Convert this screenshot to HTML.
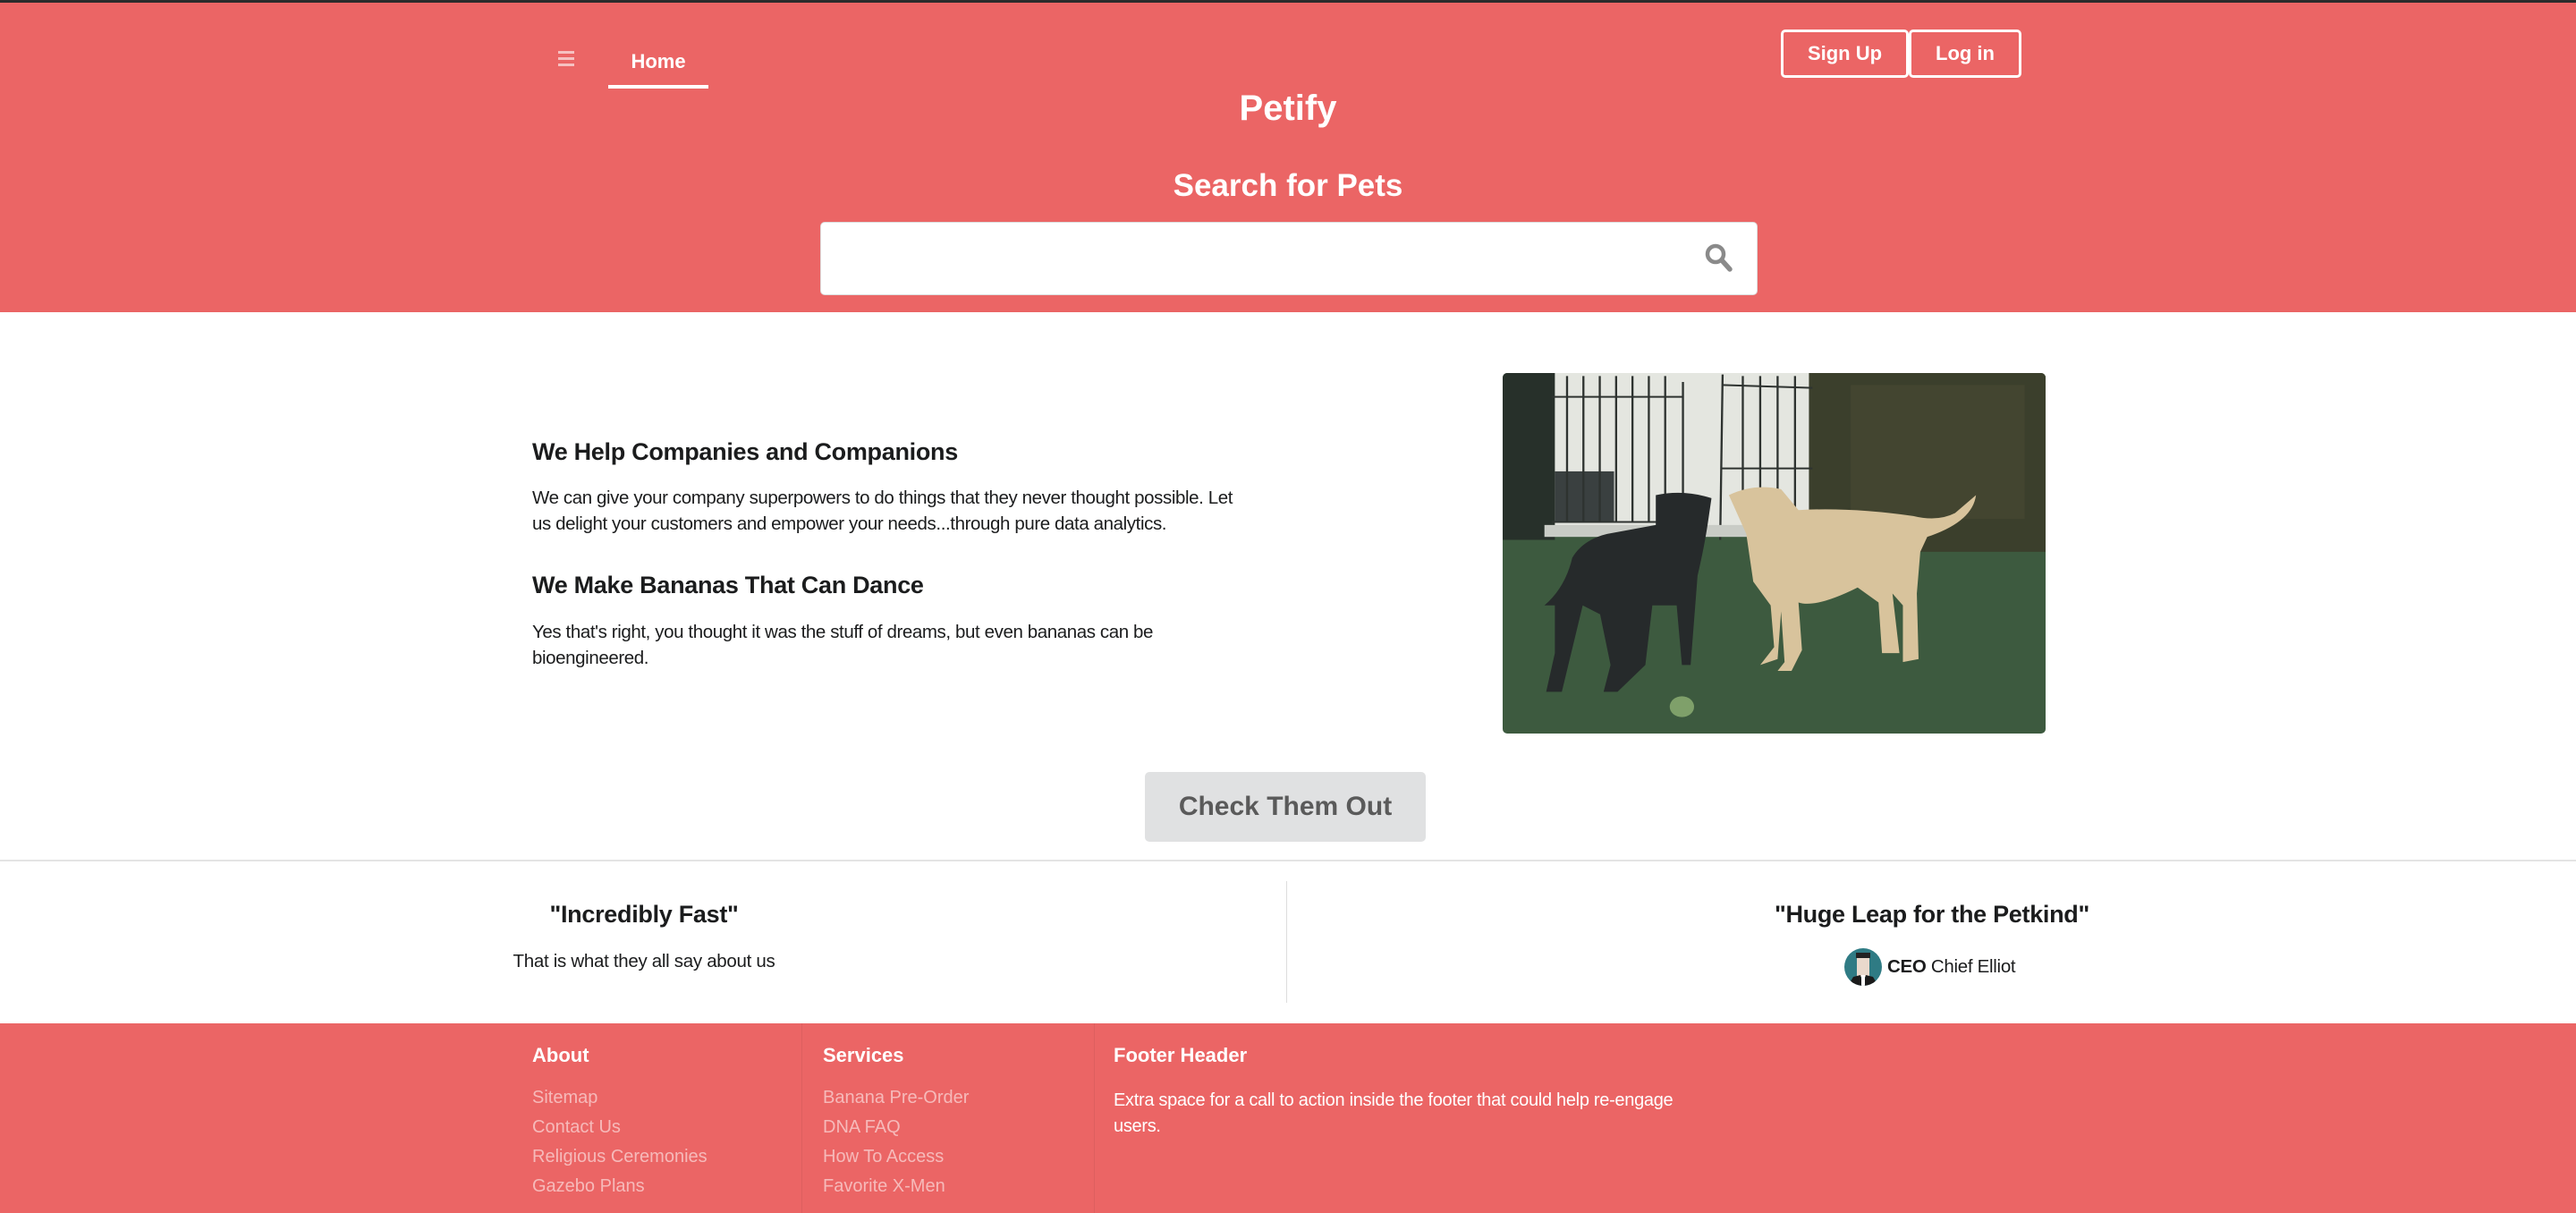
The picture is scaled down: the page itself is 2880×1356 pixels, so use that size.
<!DOCTYPE html>
<html><head><meta charset="utf-8">
<style>
*{margin:0;padding:0;box-sizing:border-box}
body{width:2880px;height:1356px;overflow:hidden;background:#fff;font-family:"Liberation Sans",sans-serif;color:#1b1c1d;position:relative}
.abs{position:absolute}
.hdr{left:0;top:0;width:2880px;height:349px;background:#eb6565;border-top:3px solid #2b2b2b}
.btn{top:33px;height:54px;border:3px solid #fff;border-radius:5px;color:#fff;font-weight:bold;font-size:22px;display:flex;align-items:center;justify-content:center}
.c{text-align:center;white-space:nowrap}
.h3{font-size:27px;font-weight:bold;letter-spacing:-0.3px}
.p{font-size:20.5px;line-height:29px;letter-spacing:-0.4px;white-space:nowrap}
.ft{left:0;top:1144px;width:2880px;height:212px;background:#eb6565}
.fh{color:#fff;font-weight:bold;font-size:22px}
.fl{color:rgba(255,255,255,.55);font-size:20px;line-height:33px;white-space:nowrap}
</style></head><body>
<div class="abs hdr"></div>
<div class="abs" style="left:624px;top:57px;width:18px;height:16px">
<div style="height:3px;background:#f6c1c1;margin-bottom:4px"></div><div style="height:3px;background:#f6c1c1;margin-bottom:4px"></div><div style="height:3px;background:#f6c1c1"></div></div>
<div class="abs c" style="left:680px;top:56px;width:112px;color:#fff;font-weight:bold;font-size:22px">Home</div>
<div class="abs" style="left:680px;top:95px;width:112px;height:4px;background:#fff"></div>
<div class="abs btn" style="left:1991px;width:143px">Sign Up</div>
<div class="abs btn" style="left:2134px;width:126px">Log in</div>
<div class="abs c" style="left:1240px;top:99px;width:400px;color:#fff;font-weight:bold;font-size:40px">Petify</div>
<div class="abs c" style="left:1140px;top:188px;width:600px;color:#fff;font-weight:bold;font-size:35px">Search for Pets</div>
<div class="abs" style="left:917px;top:248px;width:1048px;height:82px;background:#fff;border:1px solid #ddd;border-radius:5px"></div>
<svg class="abs" style="left:1906px;top:272px" width="32" height="34" viewBox="0 0 32 34"><circle cx="12" cy="12" r="9" fill="none" stroke="#8a8a8a" stroke-width="4.5"/><line x1="19" y1="19" x2="28" y2="29" stroke="#8a8a8a" stroke-width="5.5" stroke-linecap="round"/></svg>

<div class="abs h3" style="left:595px;top:490px">We Help Companies and Companions</div>
<div class="abs p" style="left:595px;top:542px">We can give your company superpowers to do things that they never thought possible. Let<br>us delight your customers and empower your needs...through pure data analytics.</div>
<div class="abs h3" style="left:595px;top:639px">We Make Bananas That Can Dance</div>
<div class="abs p" style="left:595px;top:692px">Yes that's right, you thought it was the stuff of dreams, but even bananas can be<br>bioengineered.</div>

<svg class="abs" style="left:1680px;top:417px;border-radius:5px" width="607" height="403" viewBox="0 20 1560 1210" preserveAspectRatio="none">
<rect x="0" y="20" width="1560" height="1210" fill="#3d5a3f"/>
<rect x="140" y="20" width="760" height="540" fill="#e4e6e0"/>
<rect x="150" y="350" width="170" height="170" fill="#3a4040"/>
<rect x="0" y="20" width="150" height="560" fill="#27302a"/>
<rect x="880" y="20" width="680" height="600" fill="#3b3f2c"/>
<rect x="1000" y="60" width="500" height="450" fill="#4a4a33" opacity=".6"/>
<g stroke="#2e3330" stroke-width="6">
<line x1="140" y1="100" x2="520" y2="100"/><line x1="140" y1="520" x2="520" y2="520"/><line x1="630" y1="60" x2="890" y2="70"/><line x1="630" y1="340" x2="890" y2="340"/>
<line x1="185" y1="30" x2="185" y2="520"/><line x1="232" y1="30" x2="232" y2="520"/><line x1="279" y1="30" x2="279" y2="520"/><line x1="326" y1="30" x2="326" y2="520"/><line x1="373" y1="30" x2="373" y2="520"/><line x1="420" y1="30" x2="420" y2="520"/><line x1="467" y1="30" x2="467" y2="520"/><line x1="518" y1="50" x2="518" y2="520"/>
<line x1="632" y1="25" x2="625" y2="580"/><line x1="690" y1="30" x2="690" y2="480"/><line x1="740" y1="30" x2="740" y2="480"/><line x1="790" y1="30" x2="790" y2="480"/><line x1="840" y1="30" x2="840" y2="480"/>
</g>
<rect x="120" y="530" width="780" height="40" fill="#c9ccc6"/>
<path d="M440 430 Q520 410 600 440 L590 520 Q580 600 560 700 L540 1000 L515 1000 L500 800 L430 800 L410 1000 L330 1090 L290 1090 L310 1000 L280 830 L230 800 L170 1090 L125 1090 L150 960 L150 800 L120 800 Q180 740 200 640 Q230 580 300 560 L440 530 Z" fill="#262a2b"/>
<path d="M650 430 Q720 390 800 410 L850 480 Q1000 470 1180 500 Q1250 520 1300 490 L1360 430 Q1350 520 1220 570 L1200 620 L1190 760 L1195 980 L1150 990 L1150 800 L1120 760 L1140 960 L1090 960 L1080 790 L1020 740 Q900 810 850 790 L860 950 L830 1020 L790 1020 L810 990 L800 820 L790 980 L740 1000 L780 940 L770 800 L720 720 L700 560 Z" fill="#d8c39c"/>
<circle cx="515" cy="1140" r="35" fill="#7fa06a"/>
</svg>

<div class="abs" style="left:1280px;top:863px;width:314px;height:78px;background:#e0e1e2;border-radius:5px;color:#5a5a5a;font-weight:bold;font-size:30px;display:flex;align-items:center;justify-content:center">Check Them Out</div>

<div class="abs" style="left:0;top:961px;width:2880px;height:2px;background:#e4e4e4"></div>
<div class="abs" style="left:1438px;top:985px;width:1px;height:136px;background:#ddd"></div>
<div class="abs c h3" style="left:420px;top:1007px;width:600px">"Incredibly Fast"</div>
<div class="abs c" style="left:420px;top:1063px;width:600px;font-size:20.5px;letter-spacing:-0.3px">That is what they all say about us</div>
<div class="abs c h3" style="left:1860px;top:1007px;width:600px">"Huge Leap for the Petkind"</div>
<svg class="abs" style="left:2062px;top:1060px" width="42" height="42" viewBox="0 0 42 42"><defs><clipPath id="cc"><circle cx="21" cy="21" r="21"/></clipPath></defs><g clip-path="url(#cc)"><rect width="42" height="42" fill="#2f7b84"/><rect x="14" y="8" width="14" height="24" fill="#e9d9cc"/><rect x="13" y="5" width="16" height="6" fill="#222"/><path d="M4 42 L10 32 L18 30 L21 42 L24 30 L32 32 L38 42Z" fill="#1b1b1b"/><rect x="19" y="30" width="4" height="12" fill="#fff"/></g></svg>
<div class="abs" style="left:2110px;top:1069px;font-size:20.5px;white-space:nowrap;letter-spacing:-0.3px"><b>CEO</b> Chief Elliot</div>

<div class="abs ft"></div>
<div class="abs" style="left:896px;top:1144px;width:1px;height:212px;background:rgba(0,0,0,.06)"></div>
<div class="abs" style="left:1223px;top:1144px;width:1px;height:212px;background:rgba(0,0,0,.06)"></div>
<div class="abs fh" style="left:595px;top:1167px">About</div>
<div class="abs fl" style="left:595px;top:1211px">Sitemap<br>Contact Us<br>Religious Ceremonies<br>Gazebo Plans</div>
<div class="abs fh" style="left:920px;top:1167px">Services</div>
<div class="abs fl" style="left:920px;top:1211px">Banana Pre-Order<br>DNA FAQ<br>How To Access<br>Favorite X-Men</div>
<div class="abs fh" style="left:1245px;top:1167px">Footer Header</div>
<div class="abs" style="left:1245px;top:1216px;color:#fff;font-size:20px;line-height:29px;white-space:nowrap;letter-spacing:-0.3px">Extra space for a call to action inside the footer that could help re-engage<br>users.</div>
</body></html>
